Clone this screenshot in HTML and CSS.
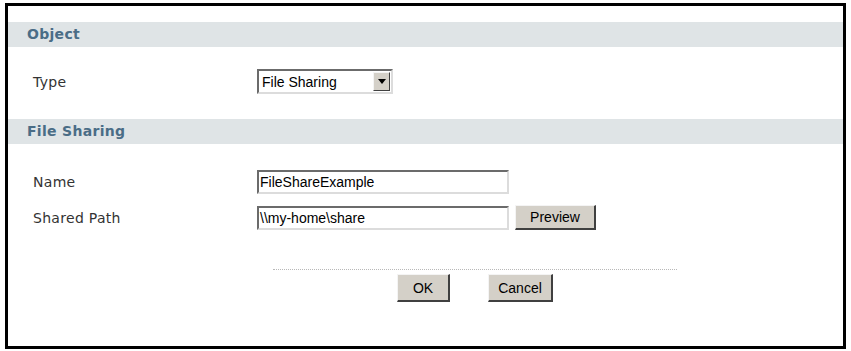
FILE: index.html
```html
<!DOCTYPE html>
<html>
<head>
<meta charset="utf-8">
<link rel="stylesheet" href="styles.css">
</head>
<body>
<div class="panel">
  <div class="section-head">Object</div>
  <div class="row row-type">
    <div class="label">Type</div>
    <div class="select">
      <span class="select-text">File Sharing</span>
      <span class="select-btn"><span class="tri"></span></span>
    </div>
  </div>
  <div class="section-head head2">File Sharing</div>
  <div class="row row-name">
    <div class="label">Name</div>
    <div class="input">FileShareExample</div>
  </div>
  <div class="row row-path">
    <div class="label">Shared Path</div>
    <div class="input">\\my-home\share</div>
    <div class="btn btn-preview">Preview</div>
  </div>
  <div class="actions">
    <div class="divider"></div>
    <div class="buttons">
      <div class="btn btn-ok">OK</div>
      <div class="btn btn-cancel">Cancel</div>
    </div>
  </div>
</div>
</body>
</html>
```
FILE: styles.css
```css
html, body {
  margin: 0;
  padding: 0;
  background: #ffffff;
}
.panel {
  box-sizing: border-box;
  margin: 3px 0 0 5px;
  width: 841px;
  height: 346px;
  border: 3px solid #000;
  padding-top: 16px;
  font-family: "DejaVu Sans", Verdana, sans-serif;
  color: #333;
}
.section-head {
  height: 25px;
  line-height: 25px;
  background: #dfe4e6;
  padding-left: 19px;
  font-weight: bold;
  font-size: 14px;
  color: #4a6d86;
  letter-spacing: 0.3px;
}
.row {
  display: flex;
  align-items: center;
}
.label {
  width: 224px;
  padding-left: 25px;
  font-size: 14px;
  letter-spacing: 0.3px;
  color: #333;
}
.row-type {
  margin-top: 22px;
}
.select {
  box-sizing: border-box;
  width: 136px;
  height: 25px;
  border-style: solid;
  border-width: 2px;
  border-color: #6b6b6b #dcdcdc #dcdcdc #6b6b6b;
  display: flex;
  align-items: center;
  justify-content: space-between;
  font-family: "Liberation Sans", Arial, sans-serif;
  font-size: 14px;
  color: #000;
  padding-left: 3px;
  padding-right: 1px;
}
.select-btn {
  box-sizing: border-box;
  width: 17px;
  height: 19px;
  background: #d4d0c8;
  border-style: solid;
  border-width: 1px;
  border-color: #f4f4f4 #404040 #404040 #f4f4f4;
  display: flex;
  align-items: center;
  justify-content: center;
}
.tri {
  width: 0;
  height: 0;
  border-left: 4px solid transparent;
  border-right: 4px solid transparent;
  border-top: 5px solid #000;
}
.head2 {
  margin-top: 25px;
}
.row-name {
  margin-top: 26px;
}
.row-path {
  margin-top: 11px;
}
.input {
  box-sizing: border-box;
  width: 252px;
  height: 24px;
  border-style: solid;
  border-width: 2px;
  border-color: #6b6b6b #dcdcdc #dcdcdc #6b6b6b;
  font-family: "Liberation Sans", Arial, sans-serif;
  font-size: 14px;
  color: #000;
  line-height: 20px;
  padding-left: 1px;
  white-space: pre;
}
.btn {
  box-sizing: border-box;
  background: #d4d0c8;
  border-style: solid;
  border-width: 1px 2px 2px 1px;
  border-color: #f4f4f4 #404040 #404040 #f4f4f4;
  font-family: "Liberation Sans", Arial, sans-serif;
  font-size: 14px;
  color: #000;
  display: flex;
  align-items: center;
  justify-content: center;
}
.btn-preview {
  margin-left: 6px;
  width: 81px;
  height: 25px;
}
.actions {
  margin-top: 39px;
  display: flex;
  flex-direction: column;
  align-items: flex-start;
  padding-left: 265px;
}
.divider {
  width: 404px;
  border-top: 1px dotted #b8b8b8;
}
.buttons {
  display: flex;
  margin-top: 4px;
  padding-left: 124px;
  gap: 38px;
}
.btn-ok {
  width: 53px;
  height: 28px;
}
.btn-cancel {
  width: 65px;
  height: 28px;
}
```
